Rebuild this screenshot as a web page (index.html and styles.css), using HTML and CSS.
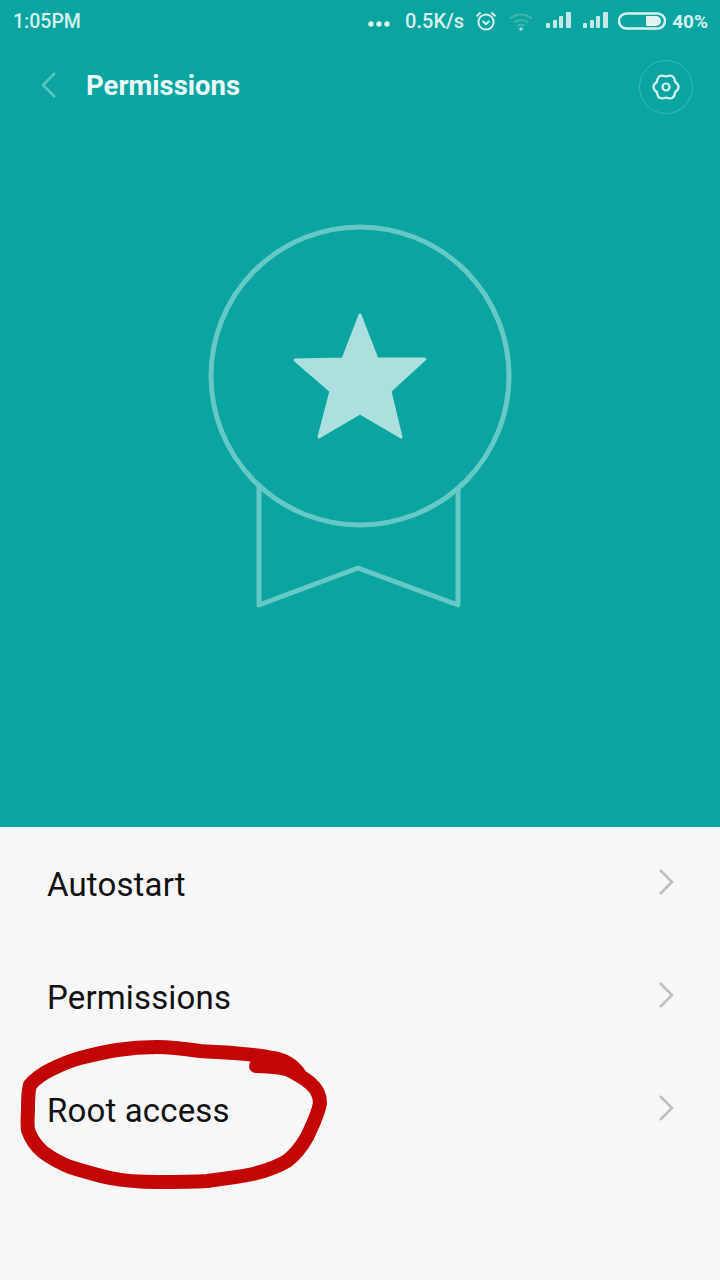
FILE: index.html
```html
<!DOCTYPE html>
<html lang="en">
  <head>
    <meta charset="UTF-8" />
    <meta name="viewport" content="width=device-width, initial-scale=1.0" />
    <title>Permissions</title>
    <link rel="stylesheet" href="styles.css">
  </head>
  <body>
    <div id="main">
      <div class="hero">
        <div class="statusbar">
          <span class="time">1:05PM</span>
          <div class="status-right">
            <svg class="dots" width="22" height="6" viewBox="0 0 22 6"><circle cx="3" cy="3" r="2.700"/><circle cx="11" cy="3" r="2.700"/><circle cx="19" cy="3" r="2.700"/></svg>
            <span class="speed">0.5K/s</span>
            <svg class="alarm" width="22" height="22" viewBox="0 0 22 22"><circle cx="11" cy="12" r="7.600"/><path d="M7.600 11l3.400 3.200 3.400-3.200M1.600 6.200l4-3.600M20.400 6.200l-4-3.600"/></svg>
            <svg class="wifi" width="26" height="20" viewBox="0 0 26 20"><path d="M2 7.500c6.500-5.500 15.500-5.500 22 0M6 11.500c4.200-3.400 9.800-3.400 14 0M9.500 15c2.200-1.600 4.800-1.600 7 0"/><circle cx="13" cy="18" r="1.800"/></svg>
            <svg class="signal" width="26" height="20" viewBox="0 0 26 20"><rect x="0" y="11" width="4" height="5" rx="1"/><rect x="7" y="8" width="4" height="8" rx="1"/><rect x="13" y="4" width="4" height="12" rx="1"/><rect x="20" y="0" width="5" height="16" rx="1"/></svg>
            <svg class="signal" width="26" height="20" viewBox="0 0 26 20"><rect x="0" y="11" width="4" height="5" rx="1"/><rect x="7" y="8" width="4" height="8" rx="1"/><rect x="13" y="4" width="4" height="12" rx="1"/><rect x="20" y="0" width="5" height="16" rx="1"/></svg>
            <svg class="battery" width="48" height="18" viewBox="0 0 48 18"><rect x="1" y="1.500" width="46" height="15" rx="7.500"/><path class="battery-fill" d="M28 4h10a5 5 0 0 1 0 10H28z"/></svg>
            <span class="percent">40%</span>
          </div>
        </div>

        <div class="titlebar">
          <svg class="back" width="18" height="28" viewBox="0 0 18 28"><path d="M15 2L3 14l12 12"/></svg>
          <h1>Permissions</h1>
          <div class="settings">
            <svg width="28" height="28" viewBox="0 0 28 28"><path d="M23.090 19.250Q22 27.860 14 24.500Q6 27.860 4.910 19.250Q-2 14 4.910 8.750Q6 .14 14 3.500Q22 .14 23.090 8.750Q30 14 23.090 19.250Z"/><circle cx="14" cy="14" r="3.500"/></svg>
          </div>
        </div>

        <div class="medal">
          <svg width="310" height="390" viewBox="205 220 310 390">
            <path class="ribbon" d="M259 486V605L358 568L458 605V490"/>
            <circle class="ring" cx="360" cy="376" r="149"/>
            <path class="star" d="M360 315L377 359H425L390 391L401 437L360 413L319 437L331 391L295 360L343 359Z"/>
          </svg>
        </div>
      </div>

      <ul class="menu">
        <li>Autostart<svg width="16" height="28" viewBox="0 0 16 28"><path d="M2 2l12 12L2 26"/></svg></li>
        <li>Permissions<svg width="16" height="28" viewBox="0 0 16 28"><path d="M2 2l12 12L2 26"/></svg></li>
        <li>Root access<svg width="16" height="28" viewBox="0 0 16 28"><path d="M2 2l12 12L2 26"/></svg></li>
      </ul>

      <!-- hand drawn circle on top of the screenshot -->
      <svg class="scribble" width="720" height="1280" viewBox="0 0 720 1280">
        <path d="M300 1075C292 1064 284 1060 273 1058C260 1055 246 1054 233 1053C222 1052 212 1052 200 1051C186 1049 172 1047 157 1047C143 1047 130 1048 117 1050C104 1052 92 1055 80 1058C69 1061 60 1065 50 1070C42 1074 35 1079 30 1085C28 1092 28 1100 28 1107C28 1115 27 1123 28 1130C31 1139 36 1146 43 1152C51 1158 60 1163 70 1167C83 1171 96 1175 110 1178C125 1181 141 1182 157 1182C174 1182 190 1182 207 1181C223 1179 238 1177 253 1174C265 1171 277 1167 287 1161C296 1154 302 1146 307 1137C312 1126 318 1115 320 1103C320 1095 316 1088 310 1083C303 1077 295 1073 287 1069C276 1067 264 1066 256 1066"/>
      </svg>
    </div>
  </body>
</html>
```

FILE: styles.css
```css
body {
  font-family: "Roboto", sans-serif;
  margin: 0;
  padding: 0;
  background-color: #f7f7f7;
}

#main {
  position: relative;
  width: 720px;
  height: 1280px;
  overflow: hidden;
}

.hero {
  height: 827px;
  background-color: #0aa5a0;
}

.statusbar {
  height: 42px;
  padding: 0 12px 0 13px;
  display: flex;
  align-items: center;
  justify-content: space-between;
  color: #d8f1ef;
  font-size: 20px;
  font-weight: 500;
}

.time {
  font-size: 19.500px;
}

.status-right {
  display: flex;
  align-items: center;
}

.dots {
  fill: #d8f1ef;
  margin-right: 15px;
  margin-top: 6px;
}

.speed {
  margin-right: 11px;
}

.alarm {
  fill: none;
  stroke: #d8f1ef;
  stroke-width: 2;
  margin-right: 11px;
}

.wifi {
  fill: none;
  stroke: #3fb6b2;
  stroke-width: 2;
  margin-right: 12px;
}

.wifi circle {
  fill: #a5dfdc;
  stroke: none;
}

.signal {
  fill: #c4eae8;
  margin-right: 11px;
  margin-top: 2px;
}

.signal + .signal {
  margin-right: 9px;
}

.battery {
  fill: none;
  stroke: #d8f1ef;
  stroke-width: 2.500;
  margin-right: 6px;
}

.battery-fill {
  fill: #e0f4f3;
  stroke: none;
}

.percent {
  font-size: 19px;
  font-weight: 700;
}

.titlebar {
  height: 90px;
  padding: 0 27px 0 40px;
  display: flex;
  align-items: center;
}

.back {
  fill: none;
  stroke: #5cc5c1;
  stroke-width: 2.500;
  margin-right: 28px;
  margin-bottom: 5px;
}

h1 {
  margin: 0 0 4px;
  flex: 1;
  color: #e9f8f7;
  font-size: 27.500px;
  font-weight: 700;
}

.settings {
  width: 52px;
  height: 52px;
  border: 1px solid #3fb6b2;
  border-radius: 50%;
  display: flex;
  align-items: center;
  justify-content: center;
}

.settings svg {
  fill: none;
  stroke: #d8f1ef;
  stroke-width: 2.200;
  stroke-linejoin: round;
}

.medal {
  display: flex;
  justify-content: center;
  padding-top: 88px;
}

.ribbon,
.ring {
  fill: none;
  stroke: #66c9c5;
  stroke-width: 5;
  stroke-linejoin: round;
  stroke-linecap: round;
}

.ring {
  fill: #0aa5a0;
}

.star {
  fill: #abe0df;
  stroke: #abe0df;
  stroke-width: 3;
  stroke-linejoin: round;
}

.menu {
  list-style: none;
  margin: 0;
  padding: 0;
}

.menu li {
  box-sizing: border-box;
  height: 113px;
  padding: 2px 46px 0 47px;
  display: flex;
  align-items: center;
  justify-content: space-between;
  color: #111;
  font-size: 33px;
  letter-spacing: 0.150px;
}

.menu svg {
  fill: none;
  stroke: #bdbdbd;
  stroke-width: 2.500;
  margin-bottom: 6px;
}

.scribble {
  position: absolute;
  top: 0;
  left: 0;
  fill: none;
  stroke: #c20606;
  stroke-width: 14;
  stroke-linecap: round;
  stroke-linejoin: round;
}
```
